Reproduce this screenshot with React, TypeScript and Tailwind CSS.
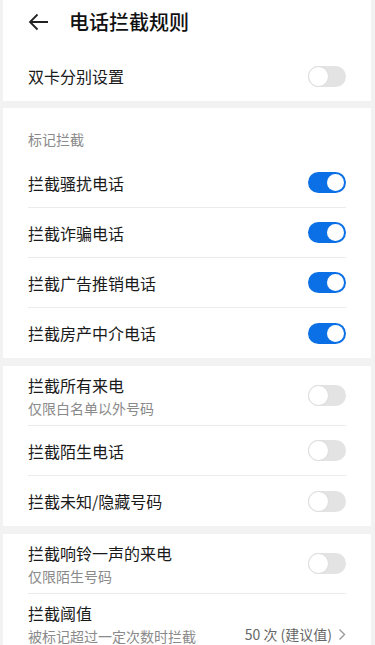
import React from 'react';

const font = { fontFamily: '"Noto Sans CJK SC", "Noto Sans", sans-serif' };

function Toggle({ on }: { on?: boolean }) {
  return on ? (
    <div className="flex h-[21px] w-[38px] shrink-0 items-center justify-end rounded-full bg-[#0b6fe6] p-[2px]">
      <div className="h-[17px] w-[17px] rounded-full bg-white" />
    </div>
  ) : (
    <div className="flex h-[21px] w-[38px] shrink-0 items-center rounded-full bg-[#e3e3e3]">
      <div className="h-[21px] w-[21px] rounded-full border border-[#dcdcdc] bg-white" />
    </div>
  );
}

type Row = { title: string; sub?: string; on?: boolean; value?: string };

function Item({ row, last }: { row: Row; last?: boolean }) {
  return (
    <div className="px-[25px]">
      <div
        className={`flex items-center justify-between ${row.sub ? 'h-[60px]' : 'h-[50px]'} ${
          last ? '' : 'border-b border-[#ececec]'
        }`}
      >
        <div className="flex flex-col">
          <span className="text-[16px] leading-[22px] text-[#1a1a1a]">{row.title}</span>
          {row.sub && <span className="mt-[2px] text-[14px] leading-[20px] text-[#8a8a8a]">{row.sub}</span>}
        </div>
        {row.value ? (
          <div className="flex items-center gap-[6px] pt-[20px] text-[14px] text-[#666]">
            <span>{row.value}</span>
            <svg width="8" height="13" viewBox="0 0 8 13" fill="none">
              <path d="M1.5 1.5 6.5 6.5 1.5 11.5" stroke="#999" strokeWidth="1.4" />
            </svg>
          </div>
        ) : (
          <Toggle on={row.on} />
        )}
      </div>
    </div>
  );
}

function Card({ rows, heading }: { rows: Row[]; heading?: string }) {
  return (
    <div className="ml-[3px] mr-[4px] bg-white">
      {heading && (
        <div className="flex h-[50px] items-end px-[25px] pb-[8px] text-[14px] text-[#8a8a8a]">{heading}</div>
      )}
      {rows.map((r, i) => (
        <Item key={r.title} row={r} last={i === rows.length - 1} />
      ))}
    </div>
  );
}

export default function App() {
  return (
    <div className="h-[645px] w-[375px] overflow-hidden bg-[#f2f2f2]" style={font}>
      <div className="ml-[3px] mr-[4px] bg-white">
        <div className="flex h-[51px] items-center pb-[7px] pl-[25px]">
          <svg width="21" height="18" viewBox="0 0 21 18" fill="none">
            <path d="M20 9H2M9.5 1.5 2 9l7.5 7.5" stroke="#222" strokeWidth="1.8" />
          </svg>
          <span className="ml-[20px] text-[20px] font-medium text-[#111]">电话拦截规则</span>
        </div>
        <Item row={{ title: '双卡分别设置' }} last />
      </div>
      <div className="h-[7px]" />
      <Card
        heading="标记拦截"
        rows={[
          { title: '拦截骚扰电话', on: true },
          { title: '拦截诈骗电话', on: true },
          { title: '拦截广告推销电话', on: true },
          { title: '拦截房产中介电话', on: true },
        ]}
      />
      <div className="h-[8px]" />
      <Card
        rows={[
          { title: '拦截所有来电', sub: '仅限白名单以外号码' },
          { title: '拦截陌生电话' },
          { title: '拦截未知/隐藏号码' },
        ]}
      />
      <div className="h-[8px]" />
      <Card
        rows={[
          { title: '拦截响铃一声的来电', sub: '仅限陌生号码' },
          { title: '拦截阈值', sub: '被标记超过一定次数时拦截', value: '50 次 (建议值)' },
        ]}
      />
    </div>
  );
}
